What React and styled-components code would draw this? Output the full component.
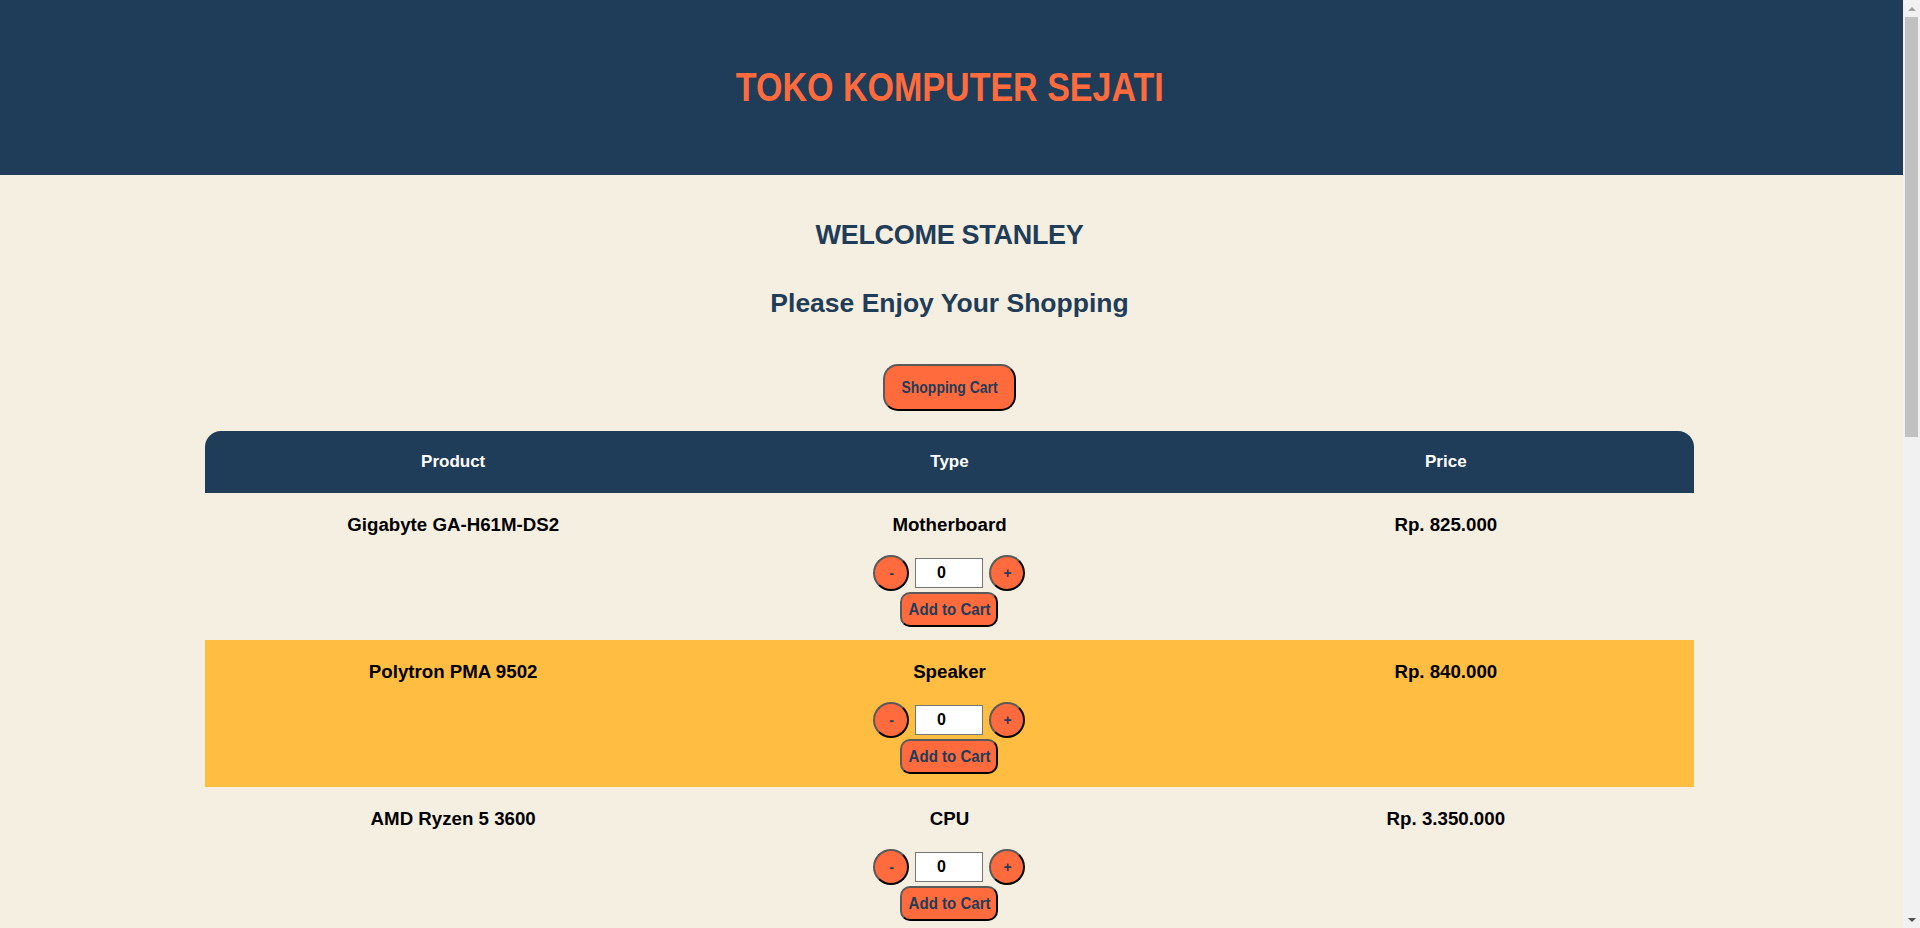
import styled, { createGlobalStyle } from 'styled-components';
import { useState } from 'react';

const GlobalStyle = createGlobalStyle`
    body {
        margin: 0;
        padding-right: 17px;
        background-color: #f5efe2;
        font-family: "Liberation Sans", Arial, sans-serif;
    }
`;

// the reference shows the classic 17px window scrollbar
const ScrollRail = styled.div`
    position: fixed;
    top: 0;
    right: 0;
    width: 17px;
    height: 100vh;
    display: flex;
    flex-direction: column;
    background-color: #f1f1f1;
`;

const ScrollArrow = styled.div`
    height: 17px;
    display: flex;
    align-items: center;
    justify-content: center;
    &::before {
        content: '';
        border-left: 4px solid transparent;
        border-right: 4px solid transparent;
        ${(p) => (p.$down ? 'border-top: 4px solid #505050;' : 'border-bottom: 4px solid #a3a3a3;')}
    }
`;

const ScrollTrack = styled.div`
    flex: 1;
    padding: 0 2px;
`;

const ScrollThumb = styled.div`
    height: 420px;
    background-color: #c1c1c1;
`;

const Header = styled.header`
    height: 175px;
    background-color: #1f3c58;
    display: flex;
    align-items: center;
    justify-content: center;
    padding-right: 4px;
`;

const Title = styled.h1`
    margin: 0;
    color: #ff6b3d;
    font-size: 41px;
    font-weight: bold;
    transform: scaleX(0.83);
`;

const Main = styled.main`
    display: flex;
    flex-direction: column;
    align-items: center;
    padding: 44px 4px 20px 0;
    color: #1f3c58;
`;

const Welcome = styled.h2`
    margin: 0;
    font-size: 27px;
    line-height: 32px;
    letter-spacing: -0.3px;
`;

const Subtitle = styled.h2`
    margin: 36px 0 0;
    font-size: 26.5px;
    line-height: 32px;
`;

const PillButton = styled.button`
    box-sizing: border-box;
    display: flex;
    align-items: center;
    justify-content: center;
    background-color: #ff6b3d;
    color: #1f3c58;
    border: 2px solid;
    border-color: #5a5a5a #000 #000 #5a5a5a;
    font-family: "Liberation Sans", sans-serif;
    font-weight: bold;
    padding: 0;
    cursor: pointer;
    white-space: nowrap;
`;

const Condensed = styled.span`
    display: inline-block;
    transform: scaleX(${(p) => p.$scale});
`;

const CartButton = styled(PillButton)`
    margin-top: 45px;
    width: 133px;
    height: 47px;
    border-radius: 15px;
    font-size: 17px;
`;

const Table = styled.div`
    margin-top: 20px;
    width: 1489px;
`;

const Row = styled.div`
    display: grid;
    grid-template-columns: repeat(3, minmax(0, 1fr));
    align-items: start;
    background-color: ${(p) => (p.$striped ? '#ffbd42' : 'transparent')};
    color: #000;
`;

const HeadRow = styled(Row)`
    height: 62px;
    align-items: center;
    background-color: #1f3c58;
    border-radius: 16px 16px 0 0;
    color: #fff;
`;

const HeadCell = styled.div`
    text-align: center;
    font-size: 17px;
    font-weight: bold;
`;

const Cell = styled.div`
    display: flex;
    flex-direction: column;
    align-items: center;
    padding: 21px 0 13px;
    font-size: 18.7px;
    line-height: 22px;
    font-weight: bold;
`;

const Qty = styled.div`
    display: flex;
    align-items: center;
    gap: 6px;
    margin-top: 19px;
`;

const RoundButton = styled(PillButton)`
    width: 36px;
    height: 36px;
    border-radius: 50%;
    font-size: 14px;
`;

const QtyInput = styled.input`
    box-sizing: border-box;
    width: 68px;
    height: 30px;
    border: 1px solid #767676;
    background: #fff;
    padding: 0 16px 0 0;
    text-align: center;
    font-family: "Liberation Sans", sans-serif;
    font-size: 16px;
    font-weight: bold;
    color: #000;
`;

const AddButton = styled(PillButton)`
    margin-top: 1px;
    width: 98px;
    height: 35px;
    border-radius: 10px;
    font-size: 16px;
`;

const products = [
    { name: 'Gigabyte GA-H61M-DS2', type: 'Motherboard', price: 'Rp. 825.000' },
    { name: 'Polytron PMA 9502', type: 'Speaker', price: 'Rp. 840.000' },
    { name: 'AMD Ryzen 5 3600', type: 'CPU', price: 'Rp. 3.350.000' },
    { name: 'Kingston HyperX Fury 8GB', type: 'RAM', price: 'Rp. 550.000' },
    { name: 'Seagate Barracuda 1TB', type: 'Harddisk', price: 'Rp. 650.000' },
    { name: 'Logitech G102', type: 'Mouse', price: 'Rp. 250.000' },
    { name: 'Rexus Legionare MX5', type: 'Keyboard', price: 'Rp. 400.000' },
    { name: 'LG 24MK430H', type: 'Monitor', price: 'Rp. 1.750.000' },
    { name: 'Corsair CV550', type: 'Power Supply', price: 'Rp. 700.000' },
    { name: 'Galax GTX 1650', type: 'VGA', price: 'Rp. 2.500.000' },
];

function ProductRow({ item, striped }) {
    const [qty, setQty] = useState(0);
    return (
        <Row $striped={striped}>
            <Cell>{item.name}</Cell>
            <Cell>
                {item.type}
                <Qty>
                    <RoundButton onClick={() => setQty(Math.max(0, qty - 1))}>-</RoundButton>
                    <QtyInput value={qty} readOnly />
                    <RoundButton onClick={() => setQty(qty + 1)}>+</RoundButton>
                </Qty>
                <AddButton>
                    <Condensed $scale={0.94}>Add to Cart</Condensed>
                </AddButton>
            </Cell>
            <Cell>{item.price}</Cell>
        </Row>
    );
}

export default function App() {
    return (
        <>
            <GlobalStyle />
            <Header>
                <Title>TOKO KOMPUTER SEJATI</Title>
            </Header>
            <Main>
                <Welcome>WELCOME STANLEY</Welcome>
                <Subtitle>Please Enjoy Your Shopping</Subtitle>
                <CartButton>
                    <Condensed $scale={0.82}>Shopping Cart</Condensed>
                </CartButton>
                <Table>
                    <HeadRow>
                        <HeadCell>Product</HeadCell>
                        <HeadCell>Type</HeadCell>
                        <HeadCell>Price</HeadCell>
                    </HeadRow>
                    {products.map((item, i) => (
                        <ProductRow key={item.name} item={item} striped={i % 2 === 1} />
                    ))}
                </Table>
            </Main>
            <ScrollRail>
                <ScrollArrow />
                <ScrollTrack>
                    <ScrollThumb />
                </ScrollTrack>
                <ScrollArrow $down />
            </ScrollRail>
        </>
    );
}
